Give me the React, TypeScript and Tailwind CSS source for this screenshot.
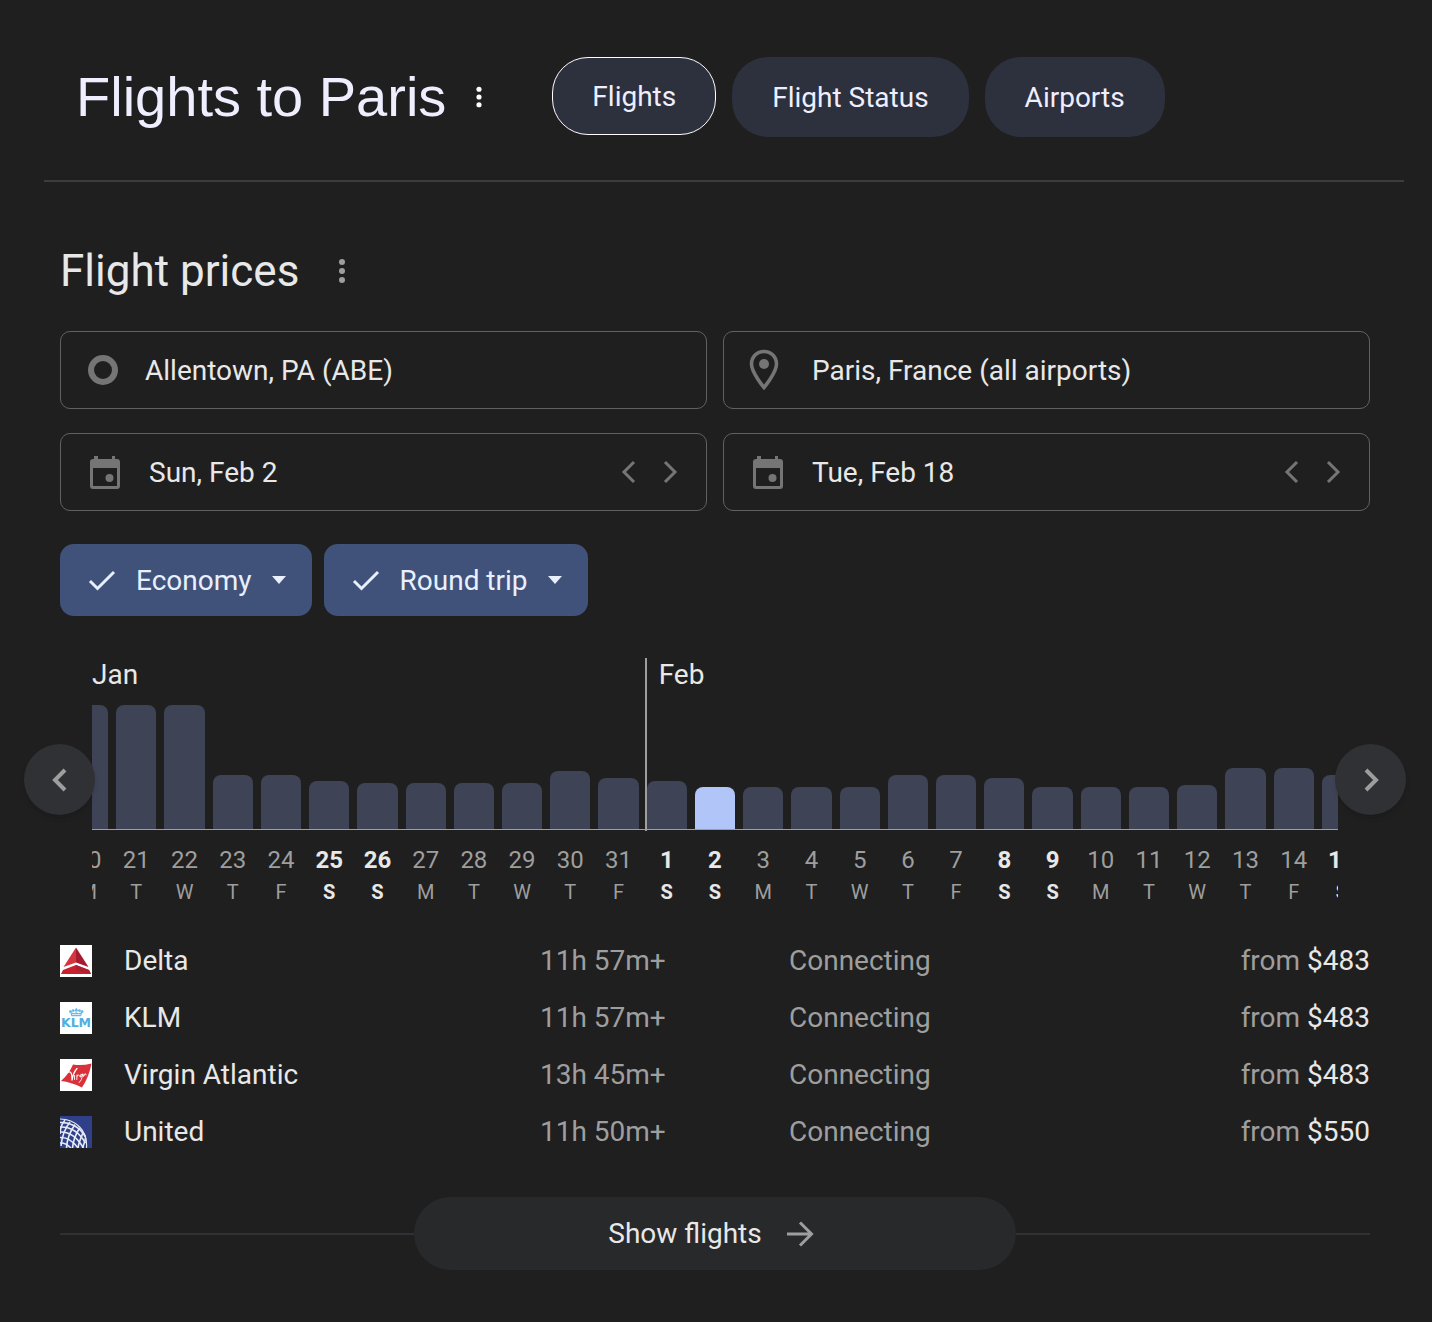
import { useState } from "react";
import type { ReactNode } from "react";

interface DayPrice {
  day: number;
  weekday: string;
  height: number;
}

interface Airline {
  name: string;
  duration: string;
  stops: string;
  price: string;
  logo: ReactNode;
}

// bar heights in px, cheapest days are the shortest
const DAYS: DayPrice[] = [
  { day: 20, weekday: "M", height: 124 },
  { day: 21, weekday: "T", height: 124 },
  { day: 22, weekday: "W", height: 124 },
  { day: 23, weekday: "T", height: 54 },
  { day: 24, weekday: "F", height: 54 },
  { day: 25, weekday: "S", height: 48 },
  { day: 26, weekday: "S", height: 46 },
  { day: 27, weekday: "M", height: 46 },
  { day: 28, weekday: "T", height: 46 },
  { day: 29, weekday: "W", height: 46 },
  { day: 30, weekday: "T", height: 58 },
  { day: 31, weekday: "F", height: 51 },
  { day: 1, weekday: "S", height: 48 },
  { day: 2, weekday: "S", height: 42 },
  { day: 3, weekday: "M", height: 42 },
  { day: 4, weekday: "T", height: 42 },
  { day: 5, weekday: "W", height: 42 },
  { day: 6, weekday: "T", height: 54 },
  { day: 7, weekday: "F", height: 54 },
  { day: 8, weekday: "S", height: 51 },
  { day: 9, weekday: "S", height: 42 },
  { day: 10, weekday: "M", height: 42 },
  { day: 11, weekday: "T", height: 42 },
  { day: 12, weekday: "W", height: 44 },
  { day: 13, weekday: "T", height: 61 },
  { day: 14, weekday: "F", height: 61 },
  { day: 15, weekday: "S", height: 54 },
];

const TABS = ["Flights", "Flight Status", "Airports"];

function DeltaLogo() {
  return (
    <svg viewBox="0 0 32 32" className="size-8" aria-hidden="true">
      <rect width="32" height="32" fill="#fff" />
      <path d="M16 2.500 V17.500 L3.500 22 Z" fill="#d8343f" />
      <path d="M16 2.500 L28.500 22 L16 17.500 Z" fill="#a51c30" />
      <path d="M16 20 L29 25 L31 29 H1 L3 25 Z" fill="#c8202f" />
      <path d="M16 20 L29 25 L31 29 L16 25 Z" fill="#b01f30" />
    </svg>
  );
}

function KlmLogo() {
  return (
    <svg viewBox="0 0 32 32" className="size-8" aria-hidden="true">
      <rect width="32" height="32" fill="#fff" />
      <g fill="#6db9e4">
        <circle cx="10.500" cy="9.500" r="1.500" />
        <circle cx="13.200" cy="8.600" r="1.400" />
        <circle cx="16.300" cy="8.200" r="1.500" />
        <circle cx="19.400" cy="8.600" r="1.400" />
        <circle cx="22" cy="9.500" r="1.500" />
        <rect x="15.800" y="6" width="1" height="2" />
        <path d="M10.500 11 L12 10.500 L14 11.200 L16.300 10.200 L18.600 11.200 L20.600 10.500 L22 11 L21.200 14.200 H11.400 Z" />
      </g>
      <path d="M12 12.500 H20.600" stroke="#fff" strokeWidth="0.700" />
      <text x="16" y="24.500" textAnchor="middle" fontFamily="DejaVu Sans, sans-serif" fontWeight="700" fontSize="12.500" fill="#55aee0">
        KLM
      </text>
    </svg>
  );
}

function VirginLogo() {
  return (
    <svg viewBox="0 0 32 32" className="size-8" aria-hidden="true">
      <rect width="32" height="32" fill="#fff" />
      <path d="M13 5.500 Q22 7 31.500 4.500 Q29 18 22 28.500 Q11 23 1 22 Q9 15 13 5.500 Z" fill="#d9303a" />
      <path d="M8.500 13 Q12.500 12 12 21.500 Q13 14 17 9.500" fill="none" stroke="#fff" strokeWidth="1.300" strokeLinecap="round" />
      <path d="M14.500 16.500 L14.500 20.500 M17 16 L16.800 20.500 M17 17 Q18.500 15 19.500 16.500 M22.500 15 Q19.500 15 20 18 Q22 18.500 22.500 15 Q22 22 19 23.500 M24 15 L23.500 17.500 Q26 12.500 26 16" fill="none" stroke="#fff" strokeWidth="0.900" strokeLinecap="round" />
    </svg>
  );
}

function UnitedLogo() {
  return (
    <svg viewBox="0 0 32 32" className="size-8" aria-hidden="true">
      <rect width="32" height="32" fill="#2f4089" />
      <g fill="none" stroke="#e6eaf7" strokeWidth="1.600">
        <path d="M0 3 C15 3 28 14 26.500 32" strokeWidth="1.100" />
        <path d="M0 6.500 C10 6 20 11 25.500 21" />
        <path d="M0 11 C10 10.500 19 16 25.500 27" />
        <path d="M0 16 C9 15.500 17 21 23.500 32" />
        <path d="M0 21.500 C7 21 13 25 18 32" />
        <path d="M0 27 C4 26.500 8 29 11 32" />
        <path d="M5 4 C1 9 0 14 0 18" />
        <path d="M10 6 C5 12 2 20 1 30" />
        <path d="M15 8.500 C11 14 7 23 6.500 32" />
        <path d="M19.500 12 C16.500 17 13 25 12.500 32" />
        <path d="M23 16.500 C21.500 21 18.500 27 18 32" />
        <path d="M25.500 22 C25 26 23.500 29 22.500 32" />
      </g>
    </svg>
  );
}

const AIRLINES: Airline[] = [
  { name: "Delta", duration: "11h 57m+", stops: "Connecting", price: "$483", logo: <DeltaLogo /> },
  { name: "KLM", duration: "11h 57m+", stops: "Connecting", price: "$483", logo: <KlmLogo /> },
  { name: "Virgin Atlantic", duration: "13h 45m+", stops: "Connecting", price: "$483", logo: <VirginLogo /> },
  { name: "United", duration: "11h 50m+", stops: "Connecting", price: "$550", logo: <UnitedLogo /> },
];

function MoreIcon({ className }: { className: string }) {
  return (
    <svg viewBox="0 0 8 28" className={className} fill="currentColor" aria-hidden="true">
      <circle cx="4" cy="5" r="3" />
      <circle cx="4" cy="14" r="3" />
      <circle cx="4" cy="23" r="3" />
    </svg>
  );
}

function Chevron({ dir, className }: { dir: "left" | "right"; className: string }) {
  return (
    <svg viewBox="0 0 16 24" className={className} fill="none" stroke="currentColor" aria-hidden="true">
      <path d={dir === "left" ? "M13 2 L3 12 L13 22" : "M3 2 L13 12 L3 22"} />
    </svg>
  );
}

function RingIcon() {
  return (
    <svg viewBox="0 0 30 30" className="w-[30px] shrink-0" aria-hidden="true">
      <circle cx="15" cy="15" r="12" fill="none" stroke="#757575" strokeWidth="6" />
    </svg>
  );
}

function PinIcon() {
  return (
    <svg viewBox="1 0 34 44" className="w-[34px] shrink-0 overflow-visible" aria-hidden="true">
      <path d="M14 3.500 C7 3.500 1.500 8.800 1.500 16 C1.500 24.500 14 39.500 14 39.500 C14 39.500 26.500 24.500 26.500 16 C26.500 8.800 21 3.500 14 3.500 Z" fill="none" stroke="#757575" strokeWidth="3.600" />
      <circle cx="14" cy="16" r="5" fill="#757575" />
    </svg>
  );
}

function CalendarIcon() {
  return (
    <svg viewBox="0 0 34 36" className="w-[34px] shrink-0" fill="#757575" aria-hidden="true">
      <path
        fillRule="evenodd"
        d="M6 2 h4 v3 h14 v-3 h3 v3 h2 a3 3 0 0 1 3 3 v24 a3 3 0 0 1 -3 3 h-24 a3 3 0 0 1 -3 -3 v-24 a3 3 0 0 1 3 -3 h1 z M5 14 v18 h24 v-18 z"
      />
      <circle cx="21.500" cy="24" r="4" />
    </svg>
  );
}

function Field({
  label, value, icon, stepper = false,
}: { label: string; value: string; icon: ReactNode; stepper?: boolean }) {
  const [text, setText] = useState(value);

  return (
    <div className="flex h-[78px] items-center rounded-[10px] border border-[#616161] pl-[27px] pr-4">
      <label className="flex min-w-0 flex-1 items-center gap-[27px]">
        {icon}
        <input
          type="text"
          aria-label={label}
          value={text}
          onChange={(e) => setText(e.target.value)}
          className="w-full min-w-0 bg-transparent pt-[2px] text-[28px] leading-9 text-[#e8e8e8] outline-none"
        />
      </label>
      {stepper && (
        <div className="flex text-[#757575]">
          <button type="button" aria-label={`${label} earlier`} className="flex h-10 w-[41px] items-center justify-center">
            <Chevron dir="left" className="h-6 w-4 stroke-3" />
          </button>
          <button type="button" aria-label={`${label} later`} className="flex h-10 w-[41px] items-center justify-center">
            <Chevron dir="right" className="h-6 w-4 stroke-3" />
          </button>
        </div>
      )}
    </div>
  );
}

function FilterChip({ label, options }: { label: string; options: string[] }) {
  return (
    <label className="flex h-[72px] items-center rounded-[14px] bg-[#40527a] px-[26px] text-[#e8f0fe]">
      <svg viewBox="0 0 32 32" className="size-8" fill="none" stroke="currentColor" strokeWidth="3" aria-hidden="true">
        <path d="M4 17 L11.500 24.500 L28 8" />
      </svg>
      <select
        aria-label={label}
        className="field-sizing-content ml-[18px] appearance-none bg-transparent pt-[2px] text-[28px] leading-9 outline-none"
      >
        {options.map((o) => (
          <option key={o}>{o}</option>
        ))}
      </select>
      <svg viewBox="0 0 14 8" className="ml-5 h-2 w-[14px]" fill="currentColor" aria-hidden="true">
        <path d="M0 0 H14 L7 8 Z" />
      </svg>
    </label>
  );
}

function PriceChart() {
  const [selected, setSelected] = useState(13);

  return (
    <div className="relative mt-[42px] px-8">
      <div className="overflow-hidden">
        <div className="-mx-7 grid grid-cols-27 text-[28px] leading-[34px] text-[#e8e8e8]">
          <div className="col-span-12 pl-7">Jan</div>
          <div className="col-span-15 pl-4">Feb</div>
        </div>
        <div className="-mx-7 grid grid-cols-27">
          {DAYS.map((d, i) => {
            const weekend = d.weekday === "S";
            return (
              <button
                key={i}
                type="button"
                onClick={() => setSelected(i)}
                className="relative flex flex-col items-center"
              >
                {d.day === 1 && <span className="absolute -top-[34px] left-[2px] h-[173px] w-[2px] bg-[#9e9e9e]" />}
                <span className="flex h-[138px] w-full items-end border-b border-[#9e9e9e] px-1">
                  <span
                    className={`w-full rounded-t-lg ${i === selected ? "bg-[#b1c5f9]" : "bg-[#3e4455]"}`}
                    style={{ height: d.height }}
                  />
                </span>
                <span className={`pt-[14px] text-2xl leading-8 ${weekend ? "font-bold text-[#e8e8e8]" : "text-[#9e9e9e]"}`}>
                  {d.day}
                </span>
                <span className={`text-xl leading-8 ${weekend ? "font-bold text-[#e8e8e8]" : "text-[#9e9e9e]"}`}>
                  {d.weekday}
                </span>
              </button>
            );
          })}
        </div>
      </div>
      <button
        type="button"
        aria-label="Earlier dates"
        className="absolute -left-9 top-[86px] flex size-[71px] items-center justify-center rounded-full bg-[#303134] text-[#9e9e9e] shadow-md"
      >
        <Chevron dir="left" className="h-6 w-4 stroke-4" />
      </button>
      <button
        type="button"
        aria-label="Later dates"
        className="absolute -right-9 top-[86px] flex size-[71px] items-center justify-center rounded-full bg-[#303134] text-[#9e9e9e] shadow-md"
      >
        <Chevron dir="right" className="h-6 w-4 stroke-4" />
      </button>
    </div>
  );
}

export default function App() {
  const [tab, setTab] = useState("Flights");

  return (
    <div className="min-h-screen bg-[#1f1f1f] pb-[52px] font-[Roboto,sans-serif] text-[#e8e8e8]">
      <header className="mr-7 ml-11 flex items-start border-b-2 border-[#3c3c3c] pt-[57px] pb-[43px] pl-8">
        <div className="flex h-20 items-center">
          <h1 className="font-['Liberation_Sans',sans-serif] text-[56px] leading-[64px] text-[#eeeeff]">Flights to Paris</h1>
          <button type="button" aria-label="More about this trip" className="ml-[29px] text-white">
            <MoreIcon className="h-6 w-2" />
          </button>
        </div>
        <nav className="ml-[69px] flex items-start gap-4">
          {TABS.map((t) => (
            <button
              key={t}
              type="button"
              onClick={() => setTab(t)}
              className={`rounded-[36px] bg-[#2d303d] pt-[2px] text-[28px] text-[#eeeeff] ${
                t === tab ? "h-[78px] border border-white px-[39px]" : "h-20 px-10"
              }`}
            >
              {t}
            </button>
          ))}
        </nav>
      </header>

      <main className="mt-[65px] mr-[62px] ml-[60px]">
        <div className="flex items-center">
          <h2 className="text-[44px] leading-[48px]">Flight prices</h2>
          <button type="button" aria-label="More about flight prices" className="ml-[39px] text-[#9e9e9e]">
            <MoreIcon className="h-7 w-2" />
          </button>
        </div>

        <form className="mt-9" onSubmit={(e) => e.preventDefault()}>
          <div className="grid grid-cols-2 gap-x-4 gap-y-6">
            <Field label="From" value="Allentown, PA (ABE)" icon={<RingIcon />} />
            <Field label="To" value="Paris, France (all airports)" icon={<PinIcon />} />
            <Field label="Departure" value="Sun, Feb 2" icon={<CalendarIcon />} stepper />
            <Field label="Return" value="Tue, Feb 18" icon={<CalendarIcon />} stepper />
          </div>
          <div className="mt-[33px] flex gap-3">
            <FilterChip label="Cabin class" options={["Economy", "Business"]} />
            <FilterChip label="Trip type" options={["Round trip", "One way"]} />
          </div>
        </form>

        <PriceChart />

        <table className="mt-6 w-full table-fixed text-left text-[28px] leading-9">
          <tbody>
            {AIRLINES.map((a) => (
              <tr key={a.name} className="h-[57px] text-[#9e9e9e]">
                <td className="w-16">{a.logo}</td>
                <th scope="row" className="w-[416px] font-normal text-[#e8e8e8]">{a.name}</th>
                <td className="w-[249px]">{a.duration}</td>
                <td>{a.stops}</td>
                <td className="text-right">
                  from <span className="text-[#e8e8e8]">{a.price}</span>
                </td>
              </tr>
            ))}
          </tbody>
        </table>

        <div className="mt-[37px] flex items-center">
          <span className="h-[2px] flex-1 bg-[#303134]" />
          <button
            type="button"
            className="flex h-[73px] w-[46%] items-center justify-center gap-6 rounded-full bg-[#28292a] pr-2 text-[28px]"
          >
            Show flights
            <svg viewBox="0 0 28 28" className="size-7" fill="none" stroke="#9e9e9e" strokeWidth="3" aria-hidden="true">
              <path d="M1 14 H25 M14 2.500 L25.500 14 L14 25.500" />
            </svg>
          </button>
          <span className="h-[2px] flex-1 bg-[#303134]" />
        </div>
      </main>
    </div>
  );
}
